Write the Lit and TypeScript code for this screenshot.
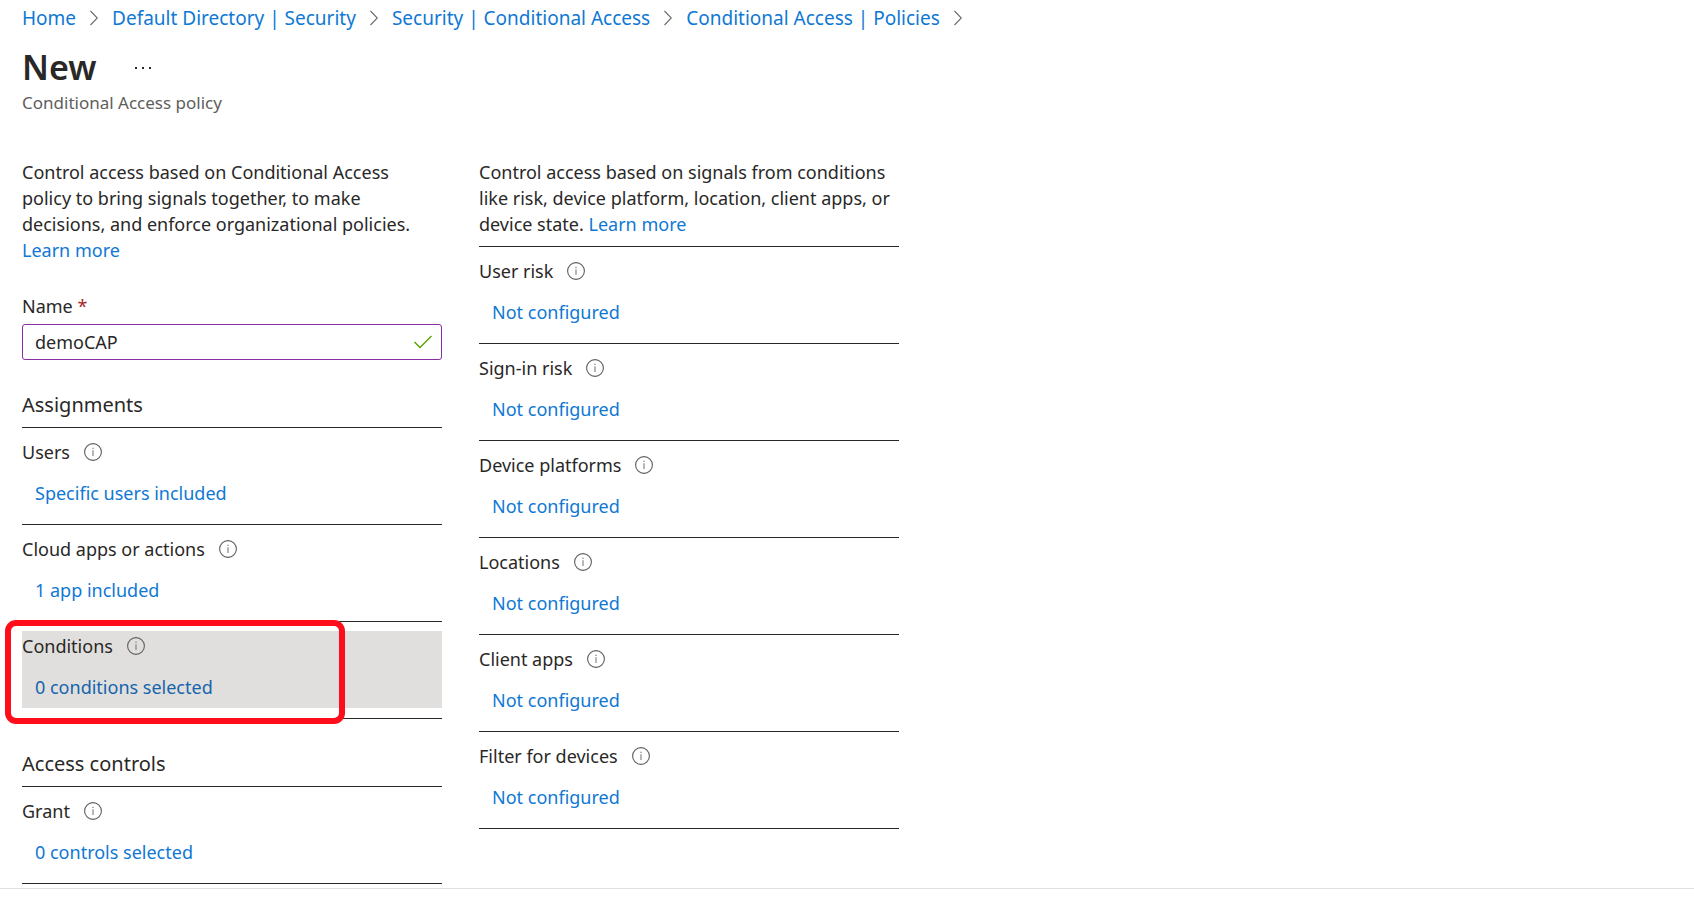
import { LitElement, html, css, svg, nothing } from "lit";
import { customElement, property, state } from "lit/decorators.js";
import { classMap } from "lit/directives/class-map.js";

interface Setting {
  label: string;
  value: string;
  selected?: boolean;
}

const CRUMBS = [
  "Home",
  "Default Directory | Security",
  "Security | Conditional Access",
  "Conditional Access | Policies",
];

const ASSIGNMENTS: Setting[] = [
  { label: "Users", value: "Specific users included" },
  { label: "Cloud apps or actions", value: "1 app included" },
  { label: "Conditions", value: "0 conditions selected", selected: true },
];

const CONTROLS: Setting[] = [{ label: "Grant", value: "0 controls selected" }];

const CONDITIONS: Setting[] = [
  "User risk",
  "Sign-in risk",
  "Device platforms",
  "Locations",
  "Client apps",
  "Filter for devices",
].map((label) => ({ label, value: "Not configured" }));

const infoIcon = html`<svg width="18" height="18" viewBox="0 0 18 18" fill="none" aria-hidden="true">
  ${svg`<circle cx="9" cy="9" r="8.4" stroke="#605e5c" stroke-width="1.1" />
  <path d="M9 7.3V13" stroke="#7d7b79" stroke-width="1.1" />
  <path d="M9 4.7V6" stroke="#7d7b79" stroke-width="1.2" />`}
</svg>`;

@customElement("setting-list")
export class SettingList extends LitElement {
  @property({ attribute: false }) items: Setting[] = [];

  static styles = css`
    :host {
      display: block;
    }
    .list {
      list-style: none;
      margin: 0;
      padding: 0;
      border-bottom: 1px solid #292827;
    }
    .row {
      position: relative;
      border-top: 1px solid #292827;
      padding: 9px 0 10px;
    }
    .body {
      padding: 2px 0 8px;
    }
    .selected .body {
      background: #e1dfdd;
    }
    .label {
      display: flex;
      align-items: center;
      gap: 14px;
      line-height: 26px;
    }
    .info {
      display: flex;
      padding: 0;
      border: 0;
      background: none;
      cursor: pointer;
    }
    .value {
      display: block;
      width: fit-content;
      margin: 15px 0 0 13px;
      padding: 0;
      border: 0;
      background: none;
      color: #0f78d4;
      font: inherit;
      line-height: 26px;
      text-align: left;
      cursor: pointer;
    }
    .selected .value {
      color: #1464ad;
    }
    .callout {
      position: absolute;
      z-index: 1;
      top: -2px;
      left: -17px;
      width: 340px;
      height: 104px;
      box-sizing: border-box;
      border: 6px solid #fe0d1b;
      border-radius: 11px;
      pointer-events: none;
    }
  `;

  render() {
    return html`<ul class="list">
      ${this.items.map(
        (item) => html`<li class=${classMap({ row: true, selected: !!item.selected })}>
          <div class="body">
            <div class="label">
              <span>${item.label}</span>
              <button class="info" type="button" aria-label=${`About ${item.label}`}>${infoIcon}</button>
            </div>
            <button class="value" type="button">${item.value}</button>
          </div>
          ${item.selected ? html`<div class="callout"></div>` : nothing}
        </li>`
      )}
    </ul>`;
  }
}

@customElement("app-root")
export class AppRoot extends LitElement {
  @state() private name = "demoCAP";

  static styles = css`
    :host {
      display: block;
      background: #fff;
      color: #292827;
      font-family: "Segoe UI", "Noto Sans", "Open Sans", sans-serif;
      font-size: 18px;
      line-height: 26px;
    }
    a {
      color: #0f78d4;
      text-decoration: none;
    }
    .page {
      padding: 5px 22px 4px;
      border-bottom: 1px solid #e1dfdd;
    }
    .crumbs {
      display: flex;
      flex-wrap: wrap;
      list-style: none;
      margin: 0 0 16px;
      padding: 0;
      font-size: 19px;
    }
    .crumb {
      display: flex;
      align-items: center;
      gap: 14px;
      margin-right: 14px;
    }
    .title-row {
      display: flex;
      align-items: center;
      gap: 38px;
    }
    .title {
      margin: 0;
      font-size: 34px;
      font-weight: 600;
      line-height: 40px;
    }
    .more {
      display: flex;
      padding: 0;
      border: 0;
      background: none;
      cursor: pointer;
    }
    .subtitle {
      margin: 3px 0 43px;
      color: #605e5c;
      font-size: 17px;
    }
    .columns {
      display: grid;
      grid-template-columns: repeat(2, minmax(0, 420px));
      gap: 37px;
      align-items: start;
    }
    .text {
      margin: 0;
    }
    .conditions {
      display: grid;
      gap: 9px;
    }
    .field {
      margin-top: 30px;
    }
    .field-label {
      display: block;
      margin-bottom: 5px;
    }
    .required {
      color: #a4262c;
    }
    .box {
      display: flex;
      align-items: center;
      height: 36px;
      box-sizing: border-box;
      padding: 0 9px 0 12px;
      border: 1px solid #8a2da5;
      border-radius: 3px;
    }
    .input {
      flex: 1;
      min-width: 0;
      padding: 0;
      border: 0;
      outline: 0;
      background: none;
      color: inherit;
      font: inherit;
    }
    .heading {
      margin: 32px 0 9px;
      font-size: 20px;
      font-weight: 400;
      line-height: 26px;
    }
  `;

  private onInput(e: Event) {
    this.name = (e.target as HTMLInputElement).value;
  }

  render() {
    return html`<div class="page">
      <nav aria-label="Breadcrumb">
        <ol class="crumbs">
          ${CRUMBS.map(
            (c) => html`<li class="crumb">
              <a href="#">${c}</a>
              <svg width="8" height="16" viewBox="0 0 8 16" fill="none" aria-hidden="true">
                <path d="M0.5 1L7.3 8L0.5 15" stroke="#6b6967" stroke-width="1.1" />
              </svg>
            </li>`
          )}
        </ol>
      </nav>
      <header>
        <div class="title-row">
          <h1 class="title">New</h1>
          <button class="more" type="button" aria-label="More actions">
            <svg width="18" height="4" viewBox="0 0 18 4" fill="#292827" aria-hidden="true">
              <rect x="1" y="2" width="2" height="2" />
              <rect x="8" y="2" width="2" height="2" />
              <rect x="15" y="2" width="2" height="2" />
            </svg>
          </button>
        </div>
        <p class="subtitle">Conditional Access policy</p>
      </header>
      <main class="columns">
        <section>
          <p class="text">
            Control access based on Conditional Access policy to bring signals together, to make decisions, and
            enforce organizational policies. <a href="#">Learn more</a>
          </p>
          <div class="field">
            <label class="field-label" for="name">Name <span class="required">*</span></label>
            <div class="box">
              <input class="input" id="name" type="text" required .value=${this.name} @input=${this.onInput} />
              <svg width="18" height="14" viewBox="0 0 18 14" fill="none" aria-hidden="true">
                <path d="M0.5 7L6 12.5L17.5 1" stroke="#57a300" stroke-width="1.4" />
              </svg>
            </div>
          </div>
          <h2 class="heading">Assignments</h2>
          <setting-list .items=${ASSIGNMENTS}></setting-list>
          <h2 class="heading">Access controls</h2>
          <setting-list .items=${CONTROLS}></setting-list>
        </section>
        <section class="conditions">
          <p class="text">
            Control access based on signals from conditions like risk, device platform, location, client apps, or
            device state. <a href="#">Learn more</a>
          </p>
          <setting-list .items=${CONDITIONS}></setting-list>
        </section>
      </main>
    </div>`;
  }
}
